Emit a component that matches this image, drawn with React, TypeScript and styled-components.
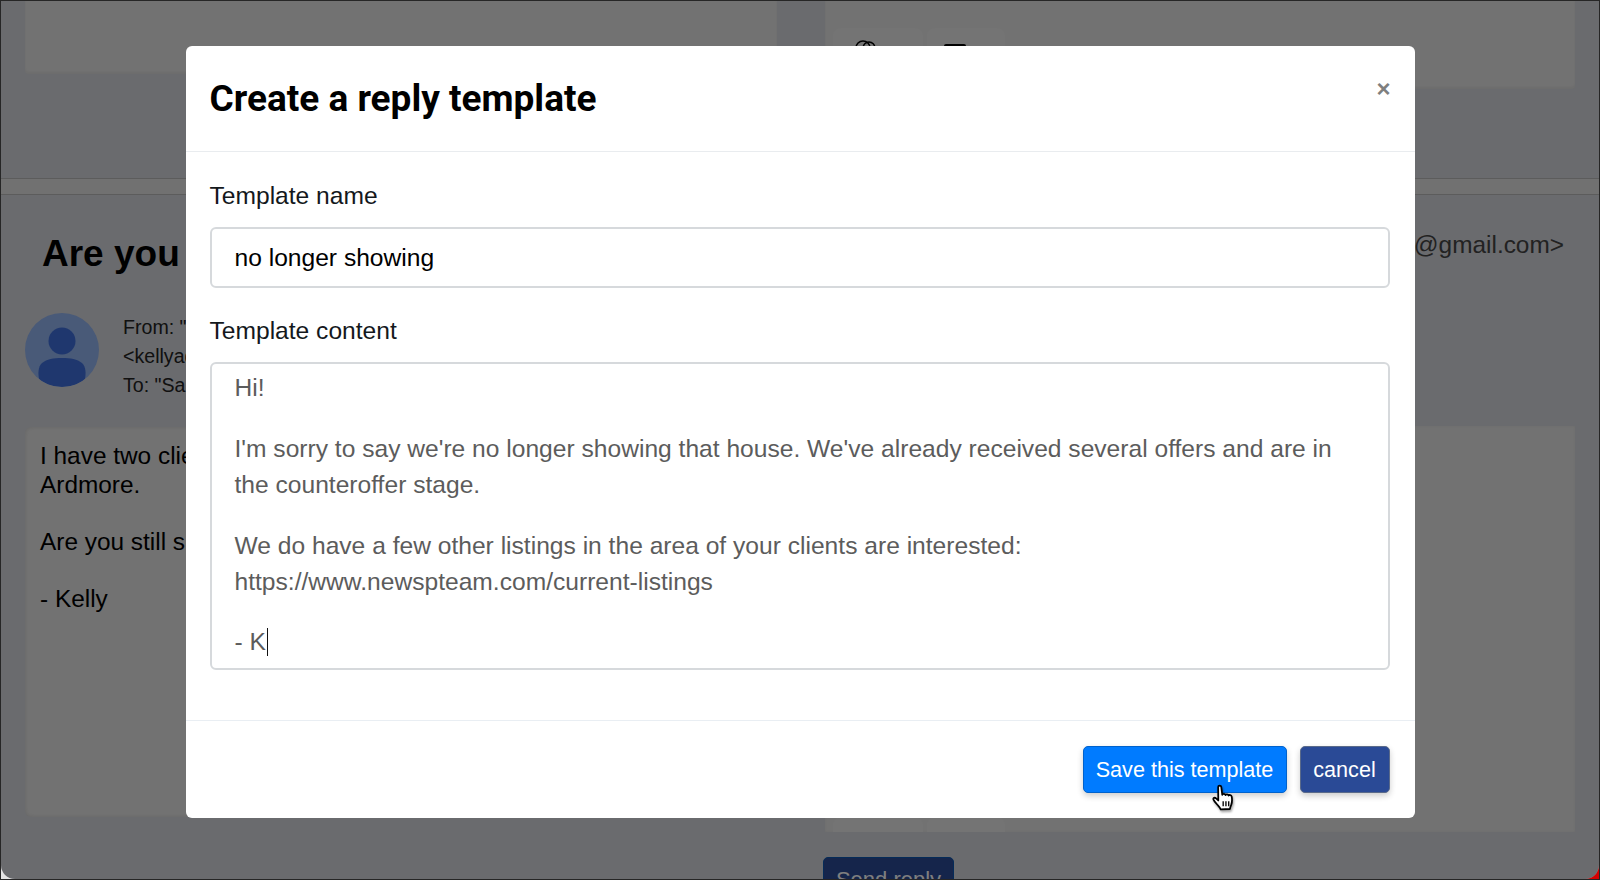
import React from "react";
import styled, { createGlobalStyle } from "styled-components";

const GlobalStyle = createGlobalStyle`
  html, body {
    margin: 0;
    padding: 0;
    height: 100%;
    overflow: hidden;
    background: #fff;
  }
  * { box-sizing: border-box; }
`;

const HandCursor = () => (
  <CursorBox viewBox="0 0 24 27" width="27" height="30">
    <path
      d="M7.2 2.6c0-1.5 2.6-1.600 2.800 0l.9 7.200c.3-1.300 2.600-1.300 2.900.2.4-1 2.500-1 2.800.4.5-.8 2.500-.7 2.800.9.4 2.400.4 5.100-.4 7.300-.5 1.500-1 2.400-1.200 3.900l-8.300.4c-.5-1.600-1.500-2.500-2.800-4-1.400-1.600-3.100-3.400-3.700-4.800-.6-1.500 1.100-2.300 2.300-1.200l2 1.900z"
      fill="#fff"
      stroke="#000"
      strokeWidth="1.600"
      strokeLinejoin="round"
    />
    <path d="M11.700 15.500v4.500M14.200 15.500v4.500M16.700 15.500v4.500" stroke="#000" strokeWidth="1.200" />
  </CursorBox>
);

const App: React.FC = () => (
  <>
    <GlobalStyle />
    <Frame>
      <Corners>
        <Page>
          <TopSection>
            <Panel $height={73} />
            <Panel $height={88}>
              <ChipRow $top={27}>
                <Chip $width={90} $inset={20}>
                  <svg width="24" height="24" viewBox="0 0 24 24" fill="none" stroke="#000" strokeWidth="1.600">
                    <circle cx="10" cy="8" r="7" />
                    <circle cx="16" cy="8" r="6" />
                  </svg>
                </Chip>
                <Chip $width={78} $inset={16}>
                  <svg width="24" height="24" viewBox="0 0 24 24">
                    <rect x="1" y="4" width="22" height="16" rx="2" fill="#000" />
                  </svg>
                </Chip>
              </ChipRow>
            </Panel>
          </TopSection>
          <Divider />
          <LowerSection>
            <MessageColumn>
              <Subject>Are you</Subject>
              <SenderRow>
                <Avatar>
                  <svg width="74" height="74" viewBox="0 0 74 74">
                    <circle cx="37" cy="28" r="13.500" fill="#3f6fdc" />
                    <path d="M14 66c-1-6-1-12 3-16 5-4 11-5 20-5s15 1 20 5c4 4 4 10 3 16-6 5-14 8-23 8s-17-3-23-8z" fill="#3f6fdc" />
                  </svg>
                </Avatar>
                <SenderInfo>
                  <div>From: "Kelly Adams"</div>
                  <div>&lt;kellyadams@gmail.com&gt;</div>
                  <div>To: "Sam"</div>
                </SenderInfo>
              </SenderRow>
              <MessageBody>
                <p>
                  I have two clients interested in the house in
                  <br />
                  Ardmore.
                </p>
                <p>Are you still showing it?</p>
                <p>- Kelly</p>
              </MessageBody>
            </MessageColumn>
            <ReplyColumn>
              <ReplyAddress>Kelly Adams &lt;kellyadams@gmail.com&gt;</ReplyAddress>
              <ReplyPanel>
                <ChipRow $top={391}>
                  <Chip $width={90} $inset={20} />
                  <Chip $width={78} $inset={16} />
                </ChipRow>
              </ReplyPanel>
              <SendButton>Send reply</SendButton>
            </ReplyColumn>
          </LowerSection>

          <Backdrop>
            <Modal>
              <ModalHeader>
                <ModalTitle>Create a reply template</ModalTitle>
                <CloseButton>×</CloseButton>
              </ModalHeader>
              <ModalBody>
                <FieldLabel>Template name</FieldLabel>
                <NameInput>no longer showing</NameInput>
                <FieldLabel>Template content</FieldLabel>
                <ContentArea>
                  <p>Hi!</p>
                  <p>
                    I'm sorry to say we're no longer showing that house. We've already received several offers and are in
                    the counteroffer stage.
                  </p>
                  <p>
                    We do have a few other listings in the area of your clients are interested:
                    <br />
                    https://www.newspteam.com/current-listings
                  </p>
                  <p>
                    - K<Caret />
                  </p>
                </ContentArea>
              </ModalBody>
              <ModalFooter>
                <SaveButton>
                  Save this template
                  <HandCursor />
                </SaveButton>
                <CancelButton>cancel</CancelButton>
              </ModalFooter>
            </Modal>
          </Backdrop>
        </Page>
      </Corners>
    </Frame>
  </>
);

const Frame = styled.div`
  width: 1600px;
  height: 880px;
  padding: 1px 1px 1px 1px;
  background: #262626;
`;

/* what shows through the rounded bottom corners of the window */
const Corners = styled.div`
  width: 100%;
  height: 100%;
  background: linear-gradient(90deg, #e4e4e4 50%, #d40000 50%);
`;

const Page = styled.div`
  position: relative;
  width: 100%;
  height: 100%;
  overflow: hidden;
  border-radius: 0 0 14px 14px;
  background: #d5d6dc;
  font-family: "Liberation Sans", Arial, sans-serif;
  color: #000;
`;

const TopSection = styled.div`
  display: grid;
  grid-template-columns: 752px 750px;
  column-gap: 48px;
  align-items: start;
  height: 177px;
  padding-left: 24px;
`;

const Panel = styled.div<{ $height: number }>`
  position: relative;
  height: ${(p) => p.$height}px;
  background: #e5e5e5;
  border-radius: 0 0 4px 4px;
  box-shadow: inset 0 -2px 3px rgba(0, 0, 0, 0.05);
`;

const ChipRow = styled.div<{ $top: number }>`
  position: absolute;
  top: ${(p) => p.$top}px;
  left: 8px;
  display: flex;
  gap: 4px;
`;

const Chip = styled.div<{ $width: number; $inset: number }>`
  display: flex;
  align-items: flex-start;
  padding: 12px 0 0 ${(p) => p.$inset}px;
  width: ${(p) => p.$width}px;
  height: 50px;
  border-radius: 8px;
  background: #e8e8e8;
`;

const Divider = styled.div`
  height: 17px;
  border-top: 1px solid #b8b8b8;
  border-bottom: 1px solid #b8b8b8;
  background: #e2e2e2;
`;

const LowerSection = styled.div`
  display: grid;
  grid-template-columns: 752px 750px;
  column-gap: 48px;
  padding-left: 24px;
`;

const MessageColumn = styled.div`
  display: flex;
  flex-direction: column;
`;

const Subject = styled.h1`
  margin: 36px 0 0 17px;
  height: 46px;
  font-size: 37px;
  line-height: 46px;
  font-weight: 700;
  white-space: nowrap;
`;

const SenderRow = styled.div`
  display: flex;
  gap: 24px;
  margin-top: 36px;
  height: 74px;
`;

const Avatar = styled.div`
  flex: none;
  width: 74px;
  height: 74px;
  border-radius: 50%;
  overflow: hidden;
  background: #92b4f0;
`;

const SenderInfo = styled.div`
  font-size: 19.600px;
  line-height: 29px;
  color: #222;
  white-space: nowrap;
`;

const MessageBody = styled.div`
  margin-top: 40px;
  height: 390px;
  padding: 15px 15px;
  border-radius: 6px;
  background: #e5e5e5;
  box-shadow: inset 0 0 4px rgba(0, 0, 0, 0.12);
  font-size: 24.400px;
  line-height: 28.500px;
  p {
    margin: 0 0 28.500px;
  }
`;

const ReplyColumn = styled.div`
  position: relative;
  display: flex;
  flex-direction: column;
  align-items: flex-start;
`;

const ReplyAddress = styled.div`
  align-self: flex-end;
  margin: 36px 11px 0 0;
  font-size: 24.400px;
  line-height: 28px;
  color: #444;
  white-space: nowrap;
`;

const ReplyPanel = styled.div`
  position: relative;
  width: 100%;
  height: 406px;
  margin-top: 167px;
  background: #e5e5e5;
  box-shadow: inset 0 0 3px rgba(0, 0, 0, 0.06);
  overflow: hidden;
`;

const SendButton = styled.div`
  width: 131px;
  height: 46px;
  margin: 25px 0 0 -2px;
  display: flex;
  align-items: center;
  justify-content: center;
  border: 1px solid #0a56b0;
  border-radius: 5px;
  background: #2a4a96;
  color: #fff;
  font-size: 22px;
`;

const Backdrop = styled.div`
  position: absolute;
  inset: 0;
  display: flex;
  align-items: flex-start;
  justify-content: center;
  padding: 45px 0 0 0;
  background: rgba(0, 0, 0, 0.5);
`;

const Modal = styled.div`
  width: 1229px;
  height: 772px;
  display: flex;
  flex-direction: column;
  border-radius: 6px;
  background: #fff;
`;

const ModalHeader = styled.div`
  position: relative;
  height: 106px;
  padding: 29px 25px 0 24px;
  border-bottom: 1px solid #e9ecef;
`;

const ModalTitle = styled.h2`
  margin: 0;
  font-family: Roboto, sans-serif;
  font-size: 37px;
  line-height: 48px;
  font-weight: 700;
`;

const CloseButton = styled.span`
  position: absolute;
  top: 25px;
  right: 24px;
  font-family: "Liberation Sans", sans-serif;
  font-size: 24px;
  line-height: 36px;
  font-weight: 700;
  color: #7f7f7f;
`;

const ModalBody = styled.div`
  flex: 1;
  padding: 30px 25px 0 24px;
`;

const FieldLabel = styled.div`
  height: 28px;
  margin-bottom: 17px;
  font-size: 24.600px;
  line-height: 28px;
  color: #14181c;
`;

const NameInput = styled.div`
  height: 61px;
  margin-bottom: 29px;
  padding: 0 23px;
  border: 2px solid #d6d9dc;
  border-radius: 6px;
  font-size: 24.600px;
  line-height: 57px;
  color: #000;
`;

const ContentArea = styled.div`
  height: 308px;
  padding: 6px 23px 0;
  border: 2px solid #d6d9dc;
  border-radius: 6px;
  overflow: hidden;
  font-size: 24.600px;
  line-height: 36px;
  color: #5c5c5c;
  p {
    margin: 0 0 24.800px;
  }
`;

const Caret = styled.span`
  display: inline-block;
  width: 1px;
  height: 28px;
  margin-left: 1px;
  vertical-align: -6px;
  background: #111;
`;

const ModalFooter = styled.div`
  height: 98px;
  display: flex;
  justify-content: flex-end;
  align-items: flex-start;
  gap: 13px;
  padding: 25px 25px 0 0;
  border-top: 1px solid #e9eef3;
`;

const FooterButton = styled.button`
  position: relative;
  height: 47px;
  padding: 0;
  border-radius: 5px;
  color: #fff;
  font-family: "Liberation Sans", sans-serif;
  font-size: 21.600px;
  box-shadow: 0 3px 6px rgba(0, 0, 0, 0.2);
`;

const SaveButton = styled(FooterButton)`
  width: 204px;
  border: 1px solid #0062cc;
  background: #007bff;
`;

const CancelButton = styled(FooterButton)`
  width: 90px;
  border: 1px solid #5a6a8a;
  background: #2a4a96;
`;

const CursorBox = styled.svg`
  position: absolute;
  left: 126px;
  top: 37px;
  filter: drop-shadow(1px 2px 1px rgba(0, 0, 0, 0.35));
`;

export default App;
